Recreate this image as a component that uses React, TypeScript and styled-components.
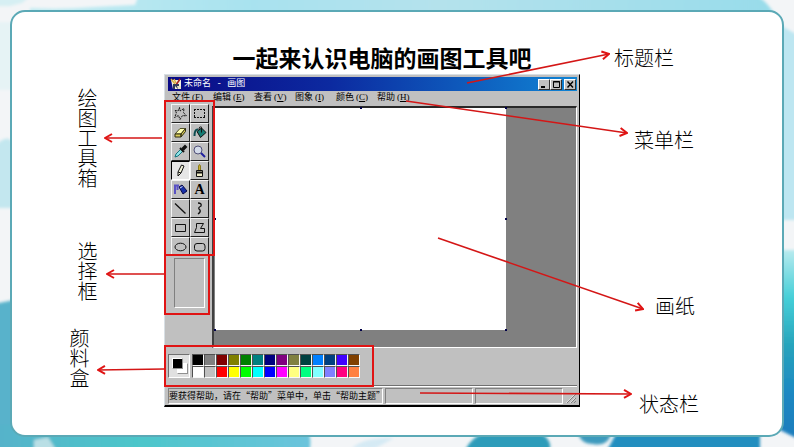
import React from "react";
import styled, { createGlobalStyle, css } from "styled-components";

const GlobalStyle = createGlobalStyle`
  *, *::before, *::after { box-sizing: border-box; }
  body { margin: 0; background: #f4f6f7; }
  button { font: inherit; color: inherit; margin: 0; padding: 0; border: 0; border-radius: 0; background: none; }
`;

const cjk = `"Noto Sans CJK SC", sans-serif`;
const silver = "#c0c0c0";
const red = "#e01414";

const Slide = styled.main`
  position: relative;
  display: flex;
  min-height: 100vh;
  padding: 10px;
  font-family: "Liberation Sans", ${cjk};
  color: #000;
`;

const Watercolor = styled.svg`
  position: absolute;
  inset: 0;
  width: 100%;
  height: 100%;
`;

const Card = styled.section`
  position: relative;
  flex: 1;
  background: #fff;
  border: 2px solid #5ba9b6;
  border-radius: 15px;
`;

const Figure = styled.div`
  position: relative;
  display: grid;
  grid-template-columns: 152fr 416fr 202fr;
`;

const LeftNotes = styled.div`
  display: flex;
  flex-direction: column;
  align-items: flex-end;
  padding: 76px 68px 0 0;
`;

const RightNotes = styled.div`
  display: flex;
  flex-direction: column;
  align-items: flex-start;
  padding: 37px 0 0 34px;
`;

const Note = styled.p<{ $before?: number; $inset?: number; $vertical?: boolean }>`
  margin: ${(p) => p.$before ?? 0}px 0 0;
  font: 300 20px/20px "Liberation Serif", ${cjk};
  white-space: nowrap;
  ${(p) =>
    p.$vertical
      ? css`
          writing-mode: vertical-rl;
          margin-right: ${p.$inset ?? 0}px;
        `
      : css`
          margin-left: ${p.$inset ?? 0}px;
        `}
`;

const Heading = styled.h1`
  margin: 0;
  padding: 29px 0 1px 20px;
  font: 700 23px/32px ${cjk};
  text-align: center;
  white-space: nowrap;
`;

const Window = styled.div`
  display: flex;
  flex-direction: column;
  background: ${silver};
  border: 1px solid #d8dfe4;
  border-right: 1px solid #000;
  border-bottom: 2px solid #000;
  padding: 2px 2px 0 3px;
`;

const TitleBar = styled.header`
  display: flex;
  align-items: center;
  height: 14px;
  padding: 0 1px 0 2px;
  background: linear-gradient(90deg, #0a0a86, #0c2aa0 40%, #1084d4);
  color: #fff;
`;

const TitleText = styled.span`
  flex: 1;
  padding-left: 2px;
  font: 9px/14px "Liberation Mono", ${cjk};
  white-space: pre;
`;

const CaptionButton = styled.button<{ $gap?: boolean }>`
  display: flex;
  width: 12px;
  height: 11px;
  margin-left: ${(p) => (p.$gap ? 2 : 0)}px;
  background: ${silver};
  border: 1px solid;
  border-color: #fff #303030 #303030 #fff;
`;

const MenuBar = styled.nav`
  display: flex;
  height: 13px;
  padding-left: 4px;
`;

const MenuItem = styled.button`
  width: 41px;
  font: 9px/13px "Liberation Serif", ${cjk};
  text-align: left;
  white-space: nowrap;
`;

const Access = styled.span`
  padding-left: 2px;
`;

const Body = styled.div`
  display: flex;
  height: 244px;
`;

const SideBar = styled.aside`
  position: relative;
  width: 44px;
  padding: 0 0 0 3px;
`;

const ToolGrid = styled.div`
  display: grid;
  grid-template-columns: 19px 19px;
  grid-auto-rows: 19px;
`;

const outline = css`
  &::after {
    content: "";
    position: absolute;
    border: 2px solid ${red};
    pointer-events: none;
  }
`;

const ToolArea = styled.div`
  position: relative;
  ${outline}
  &::after { inset: -4px -3px 0 -7px; z-index: 2; }
`;

const OptionArea = styled.div`
  position: relative;
  padding: 2px 6px 7px 3px;
  ${outline}
  &::after { inset: -2px 2px 0 -7px; }
`;

const ToolButton = styled.button<{ $pressed?: boolean }>`
  display: grid;
  place-items: center;
  border: 1px solid;
  border-color: #f4f4f4 #202020 #202020 #f4f4f4;
  background: ${silver};
  ${(p) =>
    p.$pressed &&
    css`
      background: #e6e6e6;
      border-color: #000 #fff #fff #000;
    `}
`;

const OptionBox = styled.div`
  width: 31px;
  height: 50px;
  border: 1px solid;
  border-color: #808080 #fff #fff #808080;
`;

const Workspace = styled.div`
  flex: 1;
  display: grid;
  grid-template-columns: 293fr 70fr;
  margin-top: 2px;
  background: #808080;
  border: 1px solid;
  border-width: 2px 1px 1px 2px;
  border-color: #282828 #fff #fff #404040;
`;

const Paper = styled.div`
  position: relative;
  height: 222px;
  margin-left: 1px;
  background: #fff;
`;

const Handle = styled.i<{ $x: string; $y: string }>`
  position: absolute;
  left: ${(p) => p.$x};
  top: ${(p) => p.$y};
  width: 2px;
  height: 2px;
  margin: -1px;
  background: #000048;
`;

const ColorBar = styled.div`
  position: relative;
  display: flex;
  align-items: center;
  height: 37px;
  padding: 0 0 1px;
  ${outline}
  &::after { inset: -3px 203px -2px -4px; }
`;

const CurrentColors = styled.div`
  position: relative;
  width: 22px;
  height: 24px;
  margin-right: 2px;
  background: #e0e0e0;
  border: 1px solid;
  border-color: #707070 #fff #fff #707070;
`;

const Chip = styled.span<{ $color: string; $back?: boolean }>`
  position: absolute;
  left: ${(p) => (p.$back ? 8 : 3)}px;
  top: ${(p) => (p.$back ? 8 : 3)}px;
  width: 11px;
  height: 11px;
  background: ${(p) => p.$color};
  border: 1px solid;
  border-color: #fff #909090 #909090 #fff;
`;

const Swatches = styled.div`
  display: grid;
  grid-template-columns: repeat(14, 12px);
  grid-auto-rows: 12px;
`;

const Swatch = styled.button<{ $color: string }>`
  border: 1px solid;
  border-color: #505050 #f8f8f8 #f8f8f8 #505050;
  background: ${(p) => p.$color};
`;

const StatusBar = styled.footer`
  display: flex;
  gap: 2px;
  height: 20px;
  padding: 2px 0 1px;
  border-top: 1px solid #707070;
  box-shadow: inset 0 1px #fff;
`;

const StatusCell = styled.div<{ $grow: number }>`
  flex: ${(p) => p.$grow} 1 0;
  min-width: 0;
  border: 1px solid;
  border-color: #808080 #fff #fff #808080;
  font: 9px/13px ${cjk};
  white-space: nowrap;
`;

const Grip = styled.svg`
  align-self: flex-end;
  width: 12px;
  height: 12px;
`;

const Arrows = styled.svg`
  position: absolute;
  inset: 0;
  width: 100%;
  height: 100%;
  z-index: 3;
  pointer-events: none;
`;

const Icon = ({ children }: { children: React.ReactNode }) => (
  <svg width="15" height="15" viewBox="0 0 15 15" fill="none" stroke="#111" aria-hidden="true">
    {children}
  </svg>
);

const tools: { name: string; art: React.ReactNode }[] = [
  {
    name: "任意形状裁剪",
    art: <path d="M6.5 1.5 7 5 11 2.5 10.5 6.5 13.5 10 9.5 9.5 7 13.5 5.5 9.5 1.5 11.5 3.5 7 2 4.5 5 5Z" strokeDasharray="2 1" />,
  },
  { name: "选定", art: <path d="M2 3.5H13M2 11.5H13M2.5 3V12M12.5 3V12" strokeDasharray="2 1" /> },
  {
    name: "橡皮",
    art: (
      <>
        <path d="M2 9 7 3.5H12.5L8 9Z" fill="#ffffb0" stroke="#505028" />
        <path d="M2 9H8V12H2ZM8 9 12.5 3.5V6.5L8 12Z" fill="#d8cc58" stroke="#302c10" />
      </>
    ),
  },
  {
    name: "用颜色填充",
    art: (
      <>
        <path d="M5 6.5 9.5 3 14 7.5 8.5 12.5Z" fill="#147a72" />
        <path d="M9.5 3V7.5M10 2.5Q7 .5 7 5" />
        <path d="M6 4.5Q2.5 4 2.5 11" stroke="#0c4c50" strokeWidth="2" />
      </>
    ),
  },
  {
    name: "取色",
    art: (
      <>
        <path d="M2 13 3 10 8 5 10 7 5 12Z" fill="#8fe4e8" stroke="#16747e" />
        <path d="M7 4 11 8M9 6 12 3" strokeWidth="2" />
        <path d="M10 4 12 2 13 3 11 5Z" strokeWidth="2" fill="#111" />
      </>
    ),
  },
  {
    name: "放大镜",
    art: (
      <>
        <circle cx="6" cy="6" r="4" fill="#d4dcea" stroke="#505078" />
        <path d="M9 9 13 13" stroke="#2020a0" strokeWidth="2" />
      </>
    ),
  },
  {
    name: "铅笔",
    art: <path d="M5 9 8.5 2 11 3 8 10 5 13ZM5 9 8 10" fill="#f4f4dc" />,
  },
  {
    name: "刷子",
    art: (
      <>
        <path d="M6.5 7V3Q7.5 0 8.5 3V7" fill="#c8b030" stroke="#8a7818" />
        <path d="M4.5 7.5H10.5V13.5H4.5Z" fill="#f0ecc8" />
        <path d="M4 9.5H11" strokeWidth="2" />
      </>
    ),
  },
  {
    name: "喷枪",
    art: (
      <>
        <path d="M6 5 9 3 14 9 10 12Z" fill="#1830a8" stroke="#080848" />
        <path d="M7 6 9.5 4.5" stroke="#d8e0ff" />
        <path d="M2 12V3.5H6M4.5 4V8" stroke="#5a52c4" strokeWidth="2" />
      </>
    ),
  },
  {
    name: "文字",
    art: (
      <text x="7.5" y="12" textAnchor="middle" fontFamily="Liberation Serif, serif" fontWeight="700" fontSize="14" fill="#000" stroke="none">
        A
      </text>
    ),
  },
  { name: "直线", art: <path d="M2 2.5 12.5 12.5" strokeWidth="1.3" /> },
  { name: "曲线", art: <path d="M6 2Q10 2 9 5 5 7 8 9 9 11 6 13" strokeWidth="1.3" /> },
  { name: "矩形", art: <path d="M2.5 4.5H12.5V11.5H2.5Z" /> },
  { name: "多边形", art: <path d="M4.5 3.5H11.5L8.5 8.5H12.5V12.5H2.5L4.5 7.5Z" /> },
  { name: "椭圆", art: <ellipse cx="7.5" cy="8" rx="5.5" ry="3.8" /> },
  { name: "圆角矩形", art: <rect x="2.5" y="4.5" width="10.5" height="7.5" rx="2.5" /> },
];

const palette = [
  "#000000", "#808080", "#800000", "#808000", "#008000", "#008080", "#000080",
  "#800080", "#808040", "#004040", "#0080ff", "#004080", "#4000ff", "#804000",
  "#ffffff", "#c0c0c0", "#ff0000", "#ffff00", "#00ff00", "#00ffff", "#0000ff",
  "#ff00ff", "#ffff80", "#00ff80", "#80ffff", "#8080ff", "#ff0080", "#ff8040",
];

const menus: [string, string][] = [
  ["文件", "F"], ["编辑", "E"], ["查看", "V"], ["图象", "I"], ["颜色", "C"], ["帮助", "H"],
];

const arrows: [number, number, number, number][] = [
  [455, 71, 597, 42],
  [394, 89, 615, 121],
  [426, 226, 631, 297],
  [408, 381, 619, 382],
  [150, 126, 93, 126],
  [152, 262, 95, 262],
  [152, 357, 86, 358],
];

function Backdrop() {
  return (
    <Watercolor viewBox="0 0 794 447" preserveAspectRatio="none" aria-hidden="true">
      <defs>
        <filter id="wash" x="-5%" y="-5%" width="110%" height="110%">
          <feGaussianBlur stdDeviation="1.5" />
        </filter>
        <linearGradient id="sky" x1="0" x2="1">
          <stop offset="0" stopColor="#c4ecf2" />
          <stop offset=".3" stopColor="#a8e2ef" />
          <stop offset=".55" stopColor="#b4e2ec" />
          <stop offset="1" stopColor="#98dcea" />
        </linearGradient>
        <linearGradient id="rightSea" x1="0" x2="0" y1="0" y2="1">
          <stop offset="0" stopColor="#b8eaee" />
          <stop offset=".25" stopColor="#45cfd8" />
          <stop offset=".5" stopColor="#27a4bc" />
          <stop offset=".75" stopColor="#1c88c2" />
          <stop offset="1" stopColor="#1b7cbc" />
        </linearGradient>
        <linearGradient id="leftSea" x1="0" x2="1">
          <stop offset="0" stopColor="#55b2ca" />
          <stop offset=".45" stopColor="#4cc6ca" />
          <stop offset="1" stopColor="#6bc4dc" />
        </linearGradient>
      </defs>
      <rect width="794" height="447" fill="#f3f5f7" />
      <g filter="url(#wash)">
        <path d="M-5-5H32L22 3 10 6H-5Z" fill="#d6eff3" />
        <path d="M30 8Q60 10 95 7L135 5 140-8H752Q768 2 774 14H30Z" fill="url(#sky)" />
        <path d="M-4 22H12V90H-4Z" fill="#e6f3f5" />
        <path d="M-4 145Q12 130 14 150V208H-4Z" fill="#c3e7ef" />
        <path d="M-6 304 14 300V453H-6Z" fill="#58b2cb" />
        <path d="M-6 425H305Q314 440 308 455H-6Z" fill="url(#leftSea)" />
        <path d="M34 440 48 437 56 450H34Z" fill="#b9dfe5" />
        <path d="M352 448Q364 437 394 438L374 449Z" fill="#d5eaf4" />
        <path d="M464 454Q470 434 495 430H535Q556 440 548 454Z" fill="#2e9cba" />
        <path d="M578 432H612Q608 447 593 444 580 444 578 432Z" fill="#3d9abd" />
        <path d="M618 430H760V456H604Z" fill="#248ebf" />
        <path d="M776 22Q784 28 800 36V220H776Z" fill="#bde6f1" />
        <path d="M776 250H800V440L776 428Z" fill="url(#rightSea)" />
      </g>
    </Watercolor>
  );
}

export default function App() {
  return (
    <>
      <GlobalStyle />
      <Slide>
        <Backdrop />
        <Card>
          <Figure>
            <LeftNotes>
              <Note $vertical>绘图工具箱</Note>
              <Note $vertical $before={53}>选择框</Note>
              <Note $vertical $before={27} $inset={8}>颜料盒</Note>
            </LeftNotes>
            <div>
              <Heading>一起来认识电脑的画图工具吧</Heading>
              <Window>
                <TitleBar>
                  <svg width="12" height="12" viewBox="0 0 12 12" aria-hidden="true">
                    <path d="M1 2H11V11H3Z" fill="#f4f0e0" />
                    <path d="M1 1 5 6M4 1 6 5" stroke="#d8b040" strokeWidth="1.4" />
                    <path d="M10 1 6 7" stroke="#a82020" strokeWidth="1.6" />
                    <path d="M3 6V11H5V8L8 11H9V6" fill="#303858" />
                    <path d="M7 8H11V11H8Z" fill="#e8e4c8" />
                  </svg>
                  <TitleText>未命名 - 画图</TitleText>
                  <CaptionButton aria-label="最小化">
                    <svg width="10" height="9" viewBox="0 0 10 9"><path d="M2 7H6" stroke="#000" strokeWidth="2" /></svg>
                  </CaptionButton>
                  <CaptionButton aria-label="最大化">
                    <svg width="10" height="9" viewBox="0 0 10 9"><path d="M2.5 1.5H8.5V7.5H2.5ZM2 2H9" fill="none" stroke="#000" /></svg>
                  </CaptionButton>
                  <CaptionButton $gap aria-label="关闭">
                    <svg width="10" height="9" viewBox="0 0 10 9"><path d="M2.5 1.5 8 7.5M8 1.5 2.5 7.5" stroke="#000" strokeWidth="1.4" /></svg>
                  </CaptionButton>
                </TitleBar>
                <MenuBar>
                  {menus.map(([label, key]) => (
                    <MenuItem key={key}>
                      {label}
                      <Access>(<u>{key}</u>)</Access>
                    </MenuItem>
                  ))}
                </MenuBar>
                <Body>
                  <SideBar>
                    <ToolArea>
                      <ToolGrid>
                        {tools.map((tool) => (
                          <ToolButton key={tool.name} aria-label={tool.name} $pressed={tool.name === "铅笔"}>
                            <Icon>{tool.art}</Icon>
                          </ToolButton>
                        ))}
                      </ToolGrid>
                    </ToolArea>
                    <OptionArea>
                      <OptionBox />
                    </OptionArea>
                  </SideBar>
                  <Workspace>
                    <Paper>
                      <Handle $x="50%" $y="0" />
                      <Handle $x="100%" $y="0" />
                      <Handle $x="0" $y="50%" />
                      <Handle $x="100%" $y="50%" />
                      <Handle $x="0" $y="100%" />
                      <Handle $x="50%" $y="100%" />
                      <Handle $x="100%" $y="100%" />
                    </Paper>
                  </Workspace>
                </Body>
                <ColorBar>
                  <CurrentColors>
                    <Chip $color="#fff" $back />
                    <Chip $color="#000" />
                  </CurrentColors>
                  <Swatches>
                    {palette.map((color) => (
                      <Swatch key={color} $color={color} aria-label={color} />
                    ))}
                  </Swatches>
                </ColorBar>
                <StatusBar>
                  <StatusCell $grow={217}>要获得帮助，请在“帮助”菜单中，单击“帮助主题”</StatusCell>
                  <StatusCell $grow={88}>{null}</StatusCell>
                  <StatusCell $grow={88}>{null}</StatusCell>
                  <Grip viewBox="0 0 12 12" aria-hidden="true">
                    <path d="M2 11 11 2M6 11 11 6M9 11 11 9" stroke="#808080" />
                    <path d="M1 11 10 2M5 11 10 6" stroke="#f4f4f4" strokeWidth=".6" />
                  </Grip>
                </StatusBar>
              </Window>
            </div>
            <RightNotes>
              <Note>标题栏</Note>
              <Note $before={62} $inset={20}>菜单栏</Note>
              <Note $before={146} $inset={41}>画纸</Note>
              <Note $before={78} $inset={25}>状态栏</Note>
            </RightNotes>
            <Arrows viewBox="0 0 770 403" preserveAspectRatio="none" aria-hidden="true">
              <defs>
                <marker id="head" viewBox="0 0 10 10" refX="9" refY="5" markerWidth="10" markerHeight="10" markerUnits="userSpaceOnUse" orient="auto">
                  <path d="M2 1 9 5 2 9" fill="none" stroke={red} strokeWidth="2" />
                </marker>
              </defs>
              {arrows.map(([x1, y1, x2, y2]) => (
                <path key={`${x1}-${y1}`} d={`M${x1} ${y1} ${x2} ${y2}`} stroke="#d41616" strokeWidth="1.6" markerEnd="url(#head)" />
              ))}
            </Arrows>
          </Figure>
        </Card>
      </Slide>
    </>
  );
}
